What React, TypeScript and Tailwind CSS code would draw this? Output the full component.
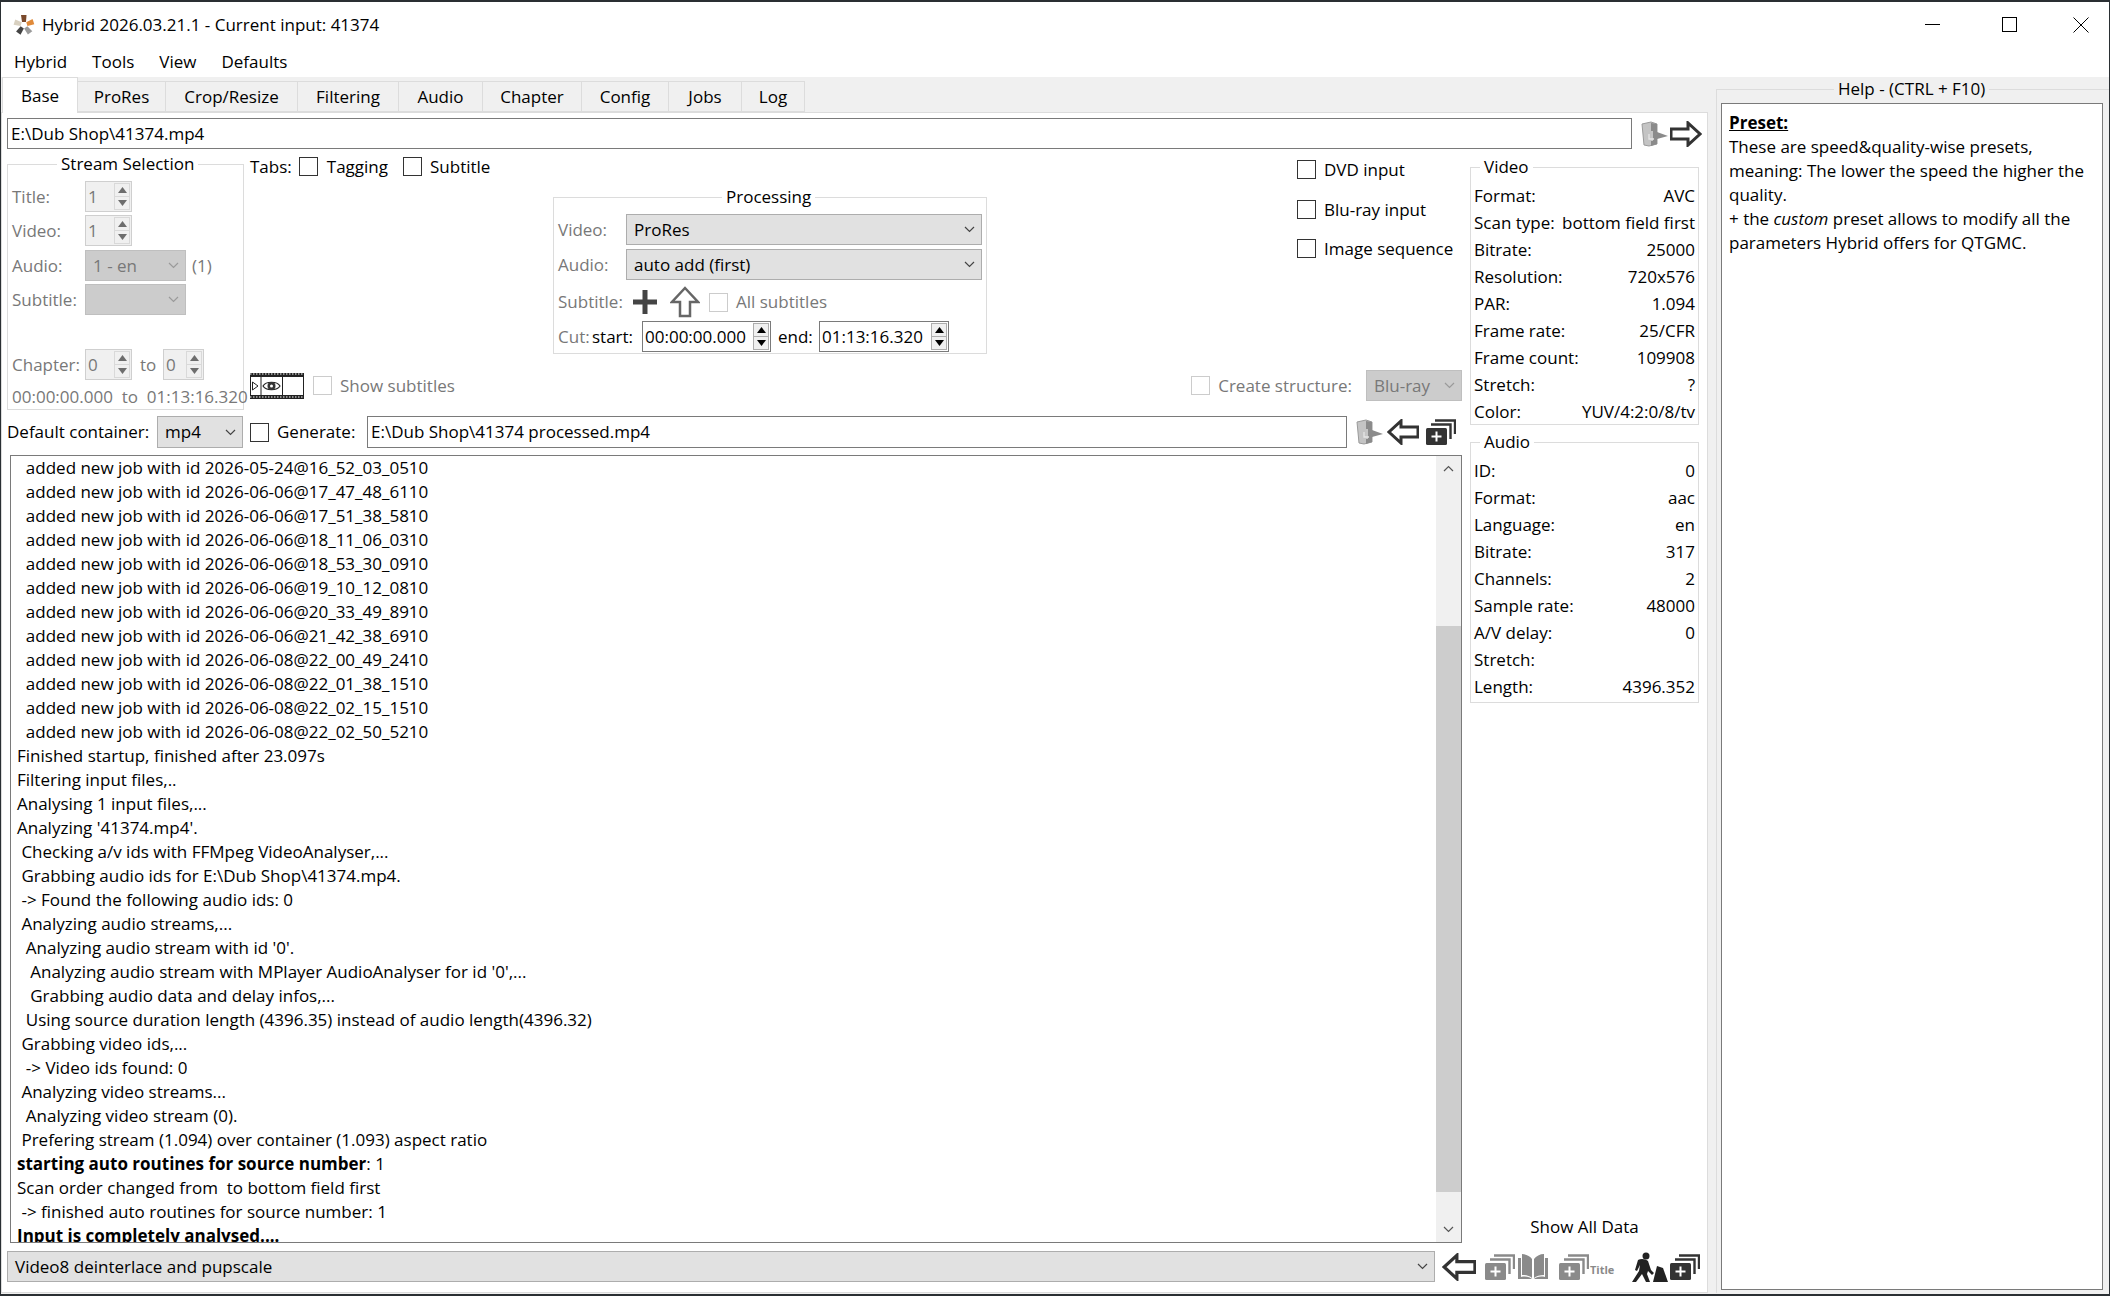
import { ReactNode } from 'react';

const logLines: [string, boolean?][] = [
  ['  added new job with id 2026-05-24@16_52_03_0510'],
  ['  added new job with id 2026-06-06@17_47_48_6110'],
  ['  added new job with id 2026-06-06@17_51_38_5810'],
  ['  added new job with id 2026-06-06@18_11_06_0310'],
  ['  added new job with id 2026-06-06@18_53_30_0910'],
  ['  added new job with id 2026-06-06@19_10_12_0810'],
  ['  added new job with id 2026-06-06@20_33_49_8910'],
  ['  added new job with id 2026-06-06@21_42_38_6910'],
  ['  added new job with id 2026-06-08@22_00_49_2410'],
  ['  added new job with id 2026-06-08@22_01_38_1510'],
  ['  added new job with id 2026-06-08@22_02_15_1510'],
  ['  added new job with id 2026-06-08@22_02_50_5210'],
  ['Finished startup, finished after 23.097s'],
  ['Filtering input files,..'],
  ['Analysing 1 input files,...'],
  ["Analyzing '41374.mp4'."],
  [' Checking a/v ids with FFMpeg VideoAnalyser,...'],
  [' Grabbing audio ids for E:\\Dub Shop\\41374.mp4.'],
  [' -> Found the following audio ids: 0'],
  [' Analyzing audio streams,...'],
  ["  Analyzing audio stream with id '0'."],
  ["   Analyzing audio stream with MPlayer AudioAnalyser for id '0',..."],
  ['   Grabbing audio data and delay infos,...'],
  ['  Using source duration length (4396.35) instead of audio length(4396.32)'],
  [' Grabbing video ids,...'],
  ['  -> Video ids found: 0'],
  [' Analyzing video streams...'],
  ['  Analyzing video stream (0).'],
  [' Prefering stream (1.094) over container (1.093) aspect ratio'],
];

const tabs = [
  ['ProRes', 'w-[88px]'],
  ['Crop/Resize', 'w-[132px]'],
  ['Filtering', 'w-[101px]'],
  ['Audio', 'w-[84px]'],
  ['Chapter', 'w-[99px]'],
  ['Config', 'w-[87px]'],
  ['Jobs', 'w-[73px]'],
  ['Log', 'w-[63px]'],
];

const videoInfo = [
  ['Format:', 'AVC'],
  ['Scan type:', 'bottom field first'],
  ['Bitrate:', '25000'],
  ['Resolution:', '720x576'],
  ['PAR:', '1.094'],
  ['Frame rate:', '25/CFR'],
  ['Frame count:', '109908'],
  ['Stretch:', '?'],
  ['Color:', 'YUV/4:2:0/8/tv'],
];

const audioInfo = [
  ['ID:', '0'],
  ['Format:', 'aac'],
  ['Language:', 'en'],
  ['Bitrate:', '317'],
  ['Channels:', '2'],
  ['Sample rate:', '48000'],
  ['A/V delay:', '0'],
  ['Stretch:', ''],
  ['Length:', '4396.352'],
];

function Chevron({ up, color = '#555' }: { up?: boolean; color?: string }) {
  return (
    <svg width="11" height="7" viewBox="0 0 11 7" className="shrink-0">
      <path d={up ? 'M1 6 L5.5 1.5 L10 6' : 'M1 1 L5.5 5.5 L10 1'} fill="none" stroke={color} strokeWidth="1.2" />
    </svg>
  );
}

function Spin({ value, width, dark, className = '' }: { value: string; width: string; dark?: boolean; className?: string }) {
  const arrow = dark ? '#000' : '#6d6d6d';
  return (
    <div className={`flex h-[31px] shrink-0 border ${dark ? 'border-[#7a7a7a] bg-white text-black' : 'border-[#cfcfcf] bg-[#f0f0f0] text-[#787878]'} ${width} ${className}`}>
      <div className="flex flex-1 items-center pl-[2px] leading-none overflow-hidden whitespace-nowrap">{value}</div>
      <div className={`my-[1px] mr-[1px] flex w-[16px] flex-col border ${dark ? 'border-[#adadad]' : 'border-[#d9d9d9]'} bg-[#f0f0f0]`}>
        <div className="flex flex-1 items-center justify-center">
          <svg width="9" height="6" viewBox="0 0 9 6"><path d="M4.5 0 L9 6 H0 Z" fill={arrow} /></svg>
        </div>
        <div className={`h-px ${dark ? 'bg-[#adadad]' : 'bg-[#d9d9d9]'}`} />
        <div className="flex flex-1 items-center justify-center">
          <svg width="9" height="6" viewBox="0 0 9 6"><path d="M0 0 H9 L4.5 6 Z" fill={arrow} /></svg>
        </div>
      </div>
    </div>
  );
}

function Combo({ value, width, disabled, className = '' }: { value: string; width: string; disabled?: boolean; className?: string }) {
  return (
    <div className={`flex h-[31px] shrink-0 items-center justify-between border pl-[7px] pr-[6px] ${disabled ? 'border-[#bfbfbf] bg-[#cccccc] text-[#787878]' : 'border-[#adadad] bg-[#e1e1e1] text-black'} ${width} ${className}`}>
      <span className="whitespace-nowrap">{value}</span>
      <Chevron color={disabled ? '#9a9a9a' : '#444'} />
    </div>
  );
}

function Check({ label, disabled, className = '' }: { label?: string; disabled?: boolean; className?: string }) {
  return (
    <div className={`flex items-center ${className}`}>
      <div className={`size-[19px] shrink-0 border bg-white ${disabled ? 'border-[#cccccc]' : 'border-[#333333]'}`} />
      {label && <span className={`ml-[8px] whitespace-nowrap ${disabled ? 'text-[#787878]' : ''}`}>{label}</span>}
    </div>
  );
}

function Group({ title, titleClass, className, children }: { title: string; titleClass: string; className: string; children: ReactNode }) {
  return (
    <div className={`relative border border-[#dcdcdc] ${className}`}>
      <span className={`absolute top-[-13px] bg-white px-[4px] leading-[24px] whitespace-nowrap ${titleClass}`}>{title}</span>
      {children}
    </div>
  );
}

function InfoRows({ rows }: { rows: string[][] }) {
  return (
    <>
      {rows.map(([k, v]) => (
        <div key={k} className="flex h-[27px] items-center justify-between px-[3px] whitespace-nowrap">
          <span>{k}</span>
          <span>{v}</span>
        </div>
      ))}
    </>
  );
}

function ArrowIcon({ left, className = '' }: { left?: boolean; className?: string }) {
  return (
    <svg viewBox="0 0 32 26" className={`h-[26px] w-[32px] shrink-0 ${className}`}>
      <path
        d={left ? 'M31 8 H14 V2 L2 13 L14 24 V18 H31 Z' : 'M1 8 H18 V2 L30 13 L18 24 V18 H1 Z'}
        fill="#fff"
        stroke="#333"
        strokeWidth="3"
      />
    </svg>
  );
}

function DoorIcon({ className = '' }: { className?: string }) {
  return (
    <svg viewBox="0 0 28 26" className={`h-[26px] w-[28px] shrink-0 ${className}`}>
      <path d="M1 3 L10 1 L16 3 L16 23 L8 25 L3 24 Z" fill="#c4c4c4" stroke="#9a9a9a" strokeWidth="1" />
      <path d="M10 2 L16 3 L16 11 L27 15 L16 18 L16 23 L10 25 Z" fill="#8b8b8b" />
      <path d="M11 10 V20 M8 13 V18 H13" fill="none" stroke="#e6e6e6" strokeWidth="1.3" />
    </svg>
  );
}

function StackIcon({ color = '#333', className = '' }: { color?: string; className?: string }) {
  return (
    <svg viewBox="0 0 30 26" className={`h-[26px] w-[30px] shrink-0 ${className}`}>
      <path d="M9 1.5 H29 V15" fill="none" stroke={color} strokeWidth="2.4" />
      <path d="M5 5.5 H24.5 V20" fill="none" stroke={color} strokeWidth="2.4" />
      <rect x="0" y="9" width="21" height="17" rx="1.5" fill={color} />
      <path d="M10.5 12.5 V22.5 M5.5 17.5 H15.5" stroke="#fff" strokeWidth="2" />
    </svg>
  );
}

function BookIcon({ className = '' }: { className?: string }) {
  return (
    <svg viewBox="0 0 32 28" className={`h-[28px] w-[32px] shrink-0 ${className}`}>
      <path d="M1 5 H4 V24 C9 23 13 24 15 26 H1 Z M31 5 H28 V24 C23 23 19 24 17 26 H31 Z" fill="#8a8a8a" />
      <path d="M5 1 C9 1 13 3 15 6 V25 C13 23 9 22 5 22 Z M27 1 C23 1 19 3 17 6 V25 C19 23 23 22 27 22 Z" fill="#8a8a8a" />
    </svg>
  );
}

function WorkerIcon({ className = '' }: { className?: string }) {
  return (
    <svg viewBox="0 0 38 30" className={`h-[30px] w-[38px] shrink-0 ${className}`}>
      <circle cx="15" cy="4" r="3.5" fill="#222" />
      <path d="M7 8 C10 6 15 7 17 9 L20 18 L23 21 L21 23 L17 19 L16 22 L19 30 H15 L11 22 L5 30 H1 L8 19 L9 13 L6 19 L4 18 Z" fill="#222" />
      <path d="M26 14 L22 30 H37 L32 16 Z" fill="#222" />
    </svg>
  );
}

function FilmIcon() {
  return (
    <svg viewBox="0 0 54 26" className="h-[26px] w-[54px] shrink-0">
      <rect x="0" y="0" width="54" height="4" fill="#222" />
      <rect x="0" y="22" width="54" height="4" fill="#222" />
      <path d="M0 1 H54 M0 24 H54" stroke="#fff" strokeWidth="1.2" strokeDasharray="1.5 1.5" />
      <path d="M0.5 4 V22 M11 4 V22 M32.5 4 V22 M53.5 4 V22" stroke="#222" strokeWidth="1" />
      <path d="M2.5 9 L8 13 L2.5 17 Z" fill="#fff" stroke="#222" strokeWidth="1" />
      <path d="M13 13 C16 8 27 8 30 13 C27 18 16 18 13 13 Z" fill="#fff" stroke="#222" strokeWidth="1.2" />
      <circle cx="21.5" cy="13" r="4" fill="#333" />
      <circle cx="21.5" cy="13" r="1.5" fill="#fff" />
    </svg>
  );
}

function AppIcon() {
  return (
    <svg viewBox="0 0 22 22" className="size-[22px] shrink-0">
      <g transform="translate(11 11)">
        <path d="M-2 -3 L-3 -10 L2.5 -10 L2 -3 Z" fill="#7a4a2c" />
        <path d="M-2 -3 L-3 -10 L2.5 -10 L2 -3 Z" fill="#e08a3a" transform="rotate(72)" />
        <path d="M-2 -3 L-3 -10 L2.5 -10 L2 -3 Z" fill="#9a9a9a" transform="rotate(144)" />
        <path d="M-2 -3 L-3 -10 L2.5 -10 L2 -3 Z" fill="#444" transform="rotate(216)" />
        <path d="M-2 -3 L-3 -10 L2.5 -10 L2 -3 Z" fill="#d8d0c0" transform="rotate(288)" />
      </g>
    </svg>
  );
}

export default function App() {
  return (
    <div className="flex h-[1296px] w-[2110px] flex-col overflow-hidden border-x border-y-2 border-x-[#2a2f33] border-y-[#2a2f33] bg-white text-[17px] text-black [font-family:'Open_Sans',sans-serif]">
      {/* Title bar */}
      <div className="flex h-[45px] shrink-0 items-center pl-[12px]">
        <AppIcon />
        <span className="ml-[7px]">Hybrid 2026.03.21.1 - Current input: 41374</span>
        <div className="ml-auto flex items-center">
          <div className="mr-[62px] h-px w-[15px] bg-black" />
          <div className="mr-[56px] size-[15px] border border-black" />
          <svg width="16" height="16" viewBox="0 0 16 16" className="mr-[20px]">
            <path d="M0.5 0.5 L15.5 15.5 M15.5 0.5 L0.5 15.5" stroke="#000" strokeWidth="1" />
          </svg>
        </div>
      </div>

      {/* Menu */}
      <div className="flex h-[30px] shrink-0 items-center gap-[25px] pl-[13px]">
        <span>Hybrid</span>
        <span>Tools</span>
        <span>View</span>
        <span>Defaults</span>
      </div>

      <div className="flex min-h-0 flex-1 bg-[#f0f0f0] pb-[1px]">
        {/* Main tab widget */}
        <div className="flex w-[1707px] shrink-0 flex-col">
          <div className="flex h-[35px] shrink-0 items-end pl-[1px]">
            <div className="z-10 mb-[-1px] flex h-[36px] w-[76px] items-center justify-center border border-b-0 border-[#dcdcdc] bg-white">Base</div>
            {tabs.map(([t, w]) => (
              <div key={t} className={`flex h-[31px] items-center justify-center border-y border-r border-[#dcdcdc] bg-[#f0f0f0] ${w}`}>
                {t}
              </div>
            ))}
          </div>

          <div className="flex min-h-0 flex-1 flex-col border border-[#dcdcdc] bg-white px-[5px] pt-[5px]">
            {/* Source path */}
            <div className="flex h-[31px] shrink-0 items-center">
              <div className="flex h-[31px] w-[1625px] items-center border border-[#7a7a7a] pl-[3px]">E:\Dub Shop\41374.mp4</div>
              <DoorIcon className="ml-[9px]" />
              <ArrowIcon className="ml-[1px]" />
            </div>

            <div className="mt-[5px] flex min-h-0 flex-1">
              <div className="flex w-[1455px] shrink-0 flex-col">
                <div className="flex h-[256px] shrink-0">
                  {/* Stream selection */}
                  <Group title="Stream Selection" titleClass="left-[49px]" className="mt-[10px] flex h-[246px] w-[237px] shrink-0 flex-col px-[4px] pt-[16px]">
                    <div className="flex items-center text-[#787878]">
                      <span className="w-[73px]">Title:</span>
                      <Spin value="1" width="w-[47px]" />
                    </div>
                    <div className="mt-[3px] flex items-center text-[#787878]">
                      <span className="w-[73px]">Video:</span>
                      <Spin value="1" width="w-[47px]" />
                    </div>
                    <div className="mt-[4px] flex items-center text-[#787878]">
                      <span className="w-[73px]">Audio:</span>
                      <Combo value="1 - en" width="w-[101px]" disabled />
                      <span className="ml-[6px]">(1)</span>
                    </div>
                    <div className="mt-[3px] flex items-center text-[#787878]">
                      <span className="w-[73px]">Subtitle:</span>
                      <Combo value="" width="w-[101px]" disabled />
                    </div>
                    <div className="mt-[34px] flex items-center text-[#787878]">
                      <span className="w-[73px]">Chapter:</span>
                      <Spin value="0" width="w-[47px]" />
                      <span className="ml-[8px] w-[23px]">to</span>
                      <Spin value="0" width="w-[41px]" />
                    </div>
                    <div className="mt-[4px] whitespace-nowrap text-[#787878]">00:00:00.000&nbsp; to &nbsp;01:13:16.320</div>
                  </Group>

                  <div className="ml-[6px] flex min-w-0 flex-1 flex-col">
                    <div className="flex h-[216px] shrink-0">
                      <div className="flex h-[25px] w-[303px] shrink-0 items-center">
                        <span className="mr-[7px]">Tabs:</span>
                        <Check className="mr-[9px]" />
                        <span className="mr-[15px]">Tagging</span>
                        <Check className="mr-[8px]" />
                        <span>Subtitle</span>
                      </div>

                      {/* Processing */}
                      <Group title="Processing" titleClass="left-[168px]" className="mt-[43px] flex h-[157px] w-[434px] shrink-0 flex-col px-[4px] pt-[16px]">
                        <div className="flex items-center">
                          <span className="w-[70px] text-[#787878]">Video:</span>
                          <Combo value="ProRes" width="w-[356px]" />
                        </div>
                        <div className="mt-[4px] flex items-center">
                          <span className="w-[70px] text-[#787878]">Audio:</span>
                          <Combo value="auto add (first)" width="w-[356px]" />
                        </div>
                        <div className="mt-[4px] flex h-[36px] items-center">
                          <span className="w-[74px] text-[#787878]">Subtitle:</span>
                          <svg width="26" height="26" viewBox="0 0 26 26" className="shrink-0">
                            <path d="M13 1 V25 M1 13 H25" stroke="#444" strokeWidth="5" />
                          </svg>
                          <svg width="30" height="32" viewBox="0 0 30 32" className="ml-[12px] shrink-0">
                            <path d="M15 2 L28 16 H20 V30 H10 V16 H2 Z" fill="#fff" stroke="#666" strokeWidth="2.5" />
                          </svg>
                          <Check label="All subtitles" disabled className="ml-[9px]" />
                        </div>
                        <div className="mt-[1px] flex items-center">
                          <span className="w-[34px] text-[#787878]">Cut:</span>
                          <span className="w-[50px]">start:</span>
                          <Spin value="00:00:00.000" width="w-[129px]" dark />
                          <span className="ml-[7px] w-[41px]">end:</span>
                          <Spin value="01:13:16.320" width="w-[130px]" dark />
                        </div>
                      </Group>

                      <div className="ml-[310px] flex flex-col gap-[14px] pt-[3px]">
                        <Check label="DVD input" />
                        <Check label="Blu-ray input" />
                        <Check label="Image sequence" />
                      </div>
                    </div>

                    <div className="flex h-[31px] shrink-0 items-center">
                      <FilmIcon />
                      <Check label="Show subtitles" disabled className="ml-[9px]" />
                      <Check label="Create structure:" disabled className="ml-auto" />
                      <Combo value="Blu-ray" width="w-[96px]" disabled className="ml-[14px] mr-[0px]" />
                    </div>
                  </div>
                </div>

                {/* Output path */}
                <div className="mt-[6px] flex h-[32px] shrink-0 items-center">
                  <span className="w-[150px] whitespace-nowrap">Default container:</span>
                  <Combo value="mp4" width="w-[86px]" className="h-[32px]" />
                  <Check className="ml-[7px]" />
                  <span className="ml-[8px] w-[90px]">Generate:</span>
                  <div className="flex h-[32px] w-[980px] items-center border border-[#7a7a7a] pl-[3px]">E:\Dub Shop\41374 processed.mp4</div>
                  <DoorIcon className="ml-[9px]" />
                  <ArrowIcon left className="ml-[3px]" />
                  <StackIcon className="ml-[7px]" />
                </div>

                {/* Log */}
                <div className="mt-[7px] ml-[3px] flex h-[788px] shrink-0 border border-[#7a7a7a]">
                  <div className="min-w-0 flex-1 overflow-hidden pl-[6px]">
                    {logLines.map(([line], i) => (
                      <div key={i} className="h-[24px] whitespace-pre leading-[24px]">{line}</div>
                    ))}
                    <div className="h-[24px] whitespace-pre leading-[24px]"><b>starting auto routines for source number</b>: 1</div>
                    <div className="h-[24px] whitespace-pre leading-[24px]">Scan order changed from  to bottom field first</div>
                    <div className="h-[24px] whitespace-pre leading-[24px]"> -&gt; finished auto routines for source number: 1</div>
                    <div className="h-[24px] whitespace-pre font-bold leading-[24px]">Input is completely analysed....</div>
                  </div>
                  <div className="flex w-[25px] shrink-0 flex-col bg-[#f0f0f0]">
                    <div className="flex h-[25px] shrink-0 items-center justify-center"><Chevron up /></div>
                    <div className="mt-[145px] h-[566px] shrink-0 bg-[#cdcdcd]" />
                    <div className="mt-auto flex h-[25px] shrink-0 items-center justify-center"><Chevron /></div>
                  </div>
                </div>
              </div>

              {/* Video and audio info */}
              <div className="ml-[8px] flex w-[229px] shrink-0 flex-col">
                <Group title="Video" titleClass="left-[9px]" className="mt-[13px] h-[258px] shrink-0 pt-[14px]">
                  <InfoRows rows={videoInfo} />
                </Group>
                <Group title="Audio" titleClass="left-[9px]" className="mt-[17px] h-[261px] shrink-0 pt-[14px]">
                  <InfoRows rows={audioInfo} />
                </Group>
                <div className="mt-auto mb-[5px] text-center">Show All Data</div>
              </div>
            </div>

            {/* Preset row */}
            <div className="mt-[7px] mb-[10px] flex h-[31px] shrink-0 items-center">
              <Combo value="Video8 deinterlace and pupscale" width="w-[1428px]" />
              <ArrowIcon left className="ml-[7px] h-[28px] w-[34px]" />
              <StackIcon color="#8a8a8a" className="ml-[9px]" />
              <BookIcon className="ml-[2px]" />
              <StackIcon color="#8a8a8a" className="ml-[10px]" />
              <span className="mt-[8px] ml-[1px] w-[26px] text-[11px] font-bold text-[#8a8a8a]">Title</span>
              <WorkerIcon className="ml-[15px]" />
              <StackIcon className="ml-[1px]" />
            </div>
          </div>
        </div>

        {/* Help */}
        <div className="ml-[8px] flex min-w-0 flex-1 flex-col pt-[12px]">
          <div className="relative flex min-h-0 flex-1 flex-col border-t border-l border-[#dcdcdc] pt-[13px] pl-[4px] pr-[6px]">
            <span className="absolute top-[-13px] left-[117px] bg-[#f0f0f0] px-[4px] leading-[24px] whitespace-nowrap">Help - (CTRL + F10)</span>
            <div className="flex-1 border border-[#7a7a7a] bg-white px-[7px] pt-[7px] leading-[24px] mb-[3px]">
              <div className="font-bold underline">Preset:</div>
              <div>These are speed&amp;quality-wise presets, meaning: The lower the speed the higher the quality.</div>
              <div>+ the <i>custom</i> preset allows to modify all the parameters Hybrid offers for QTGMC.</div>
            </div>
          </div>
        </div>
      </div>
    </div>
  );
}
